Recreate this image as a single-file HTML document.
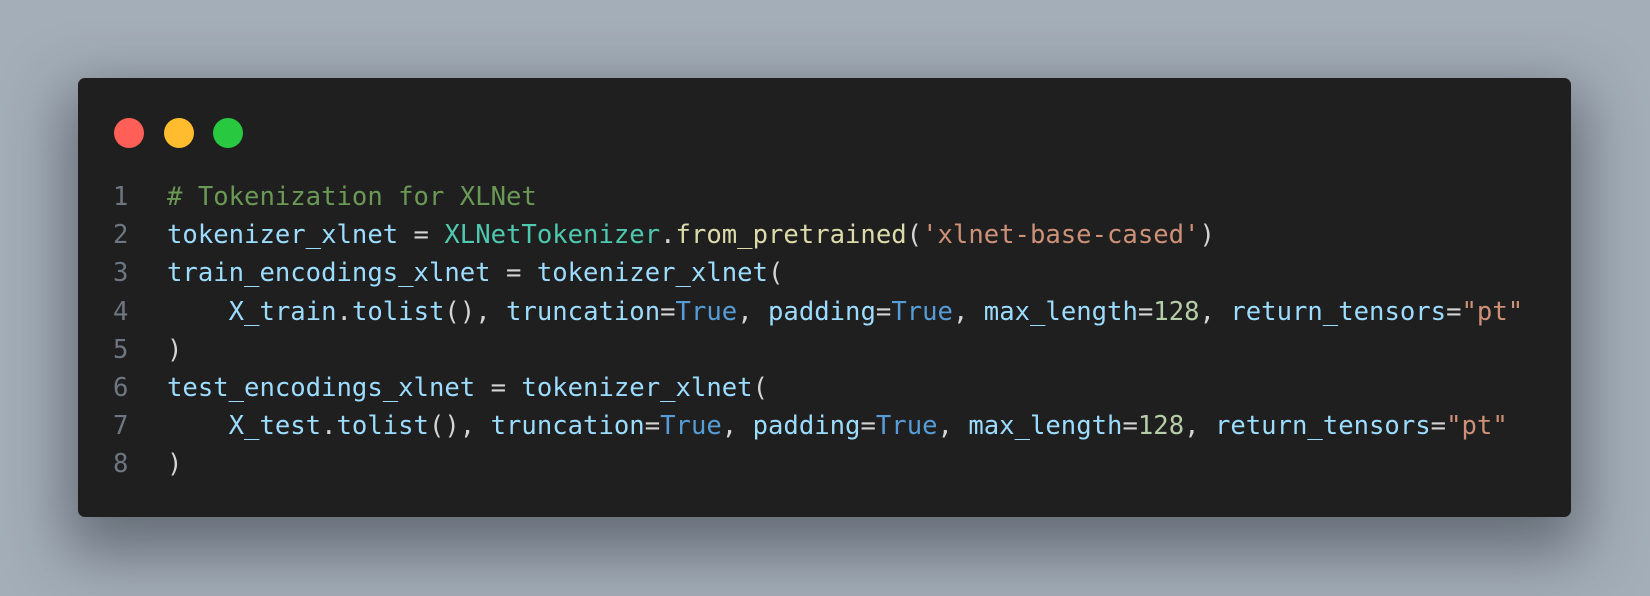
<!DOCTYPE html>
<html><head><style>
html,body{margin:0;padding:0;overflow:hidden}
body{width:1650px;height:596px;background:#a4aeb8;position:relative;overflow:hidden}
.win{position:absolute;left:78px;top:78px;width:1493px;height:439px;background:#1f1f1f;border-radius:7px;box-shadow:0 24px 60px 12px rgba(40,45,55,0.5)}
.dot{position:absolute;top:118px;width:30px;height:30px;border-radius:50%}
.code{position:absolute;left:0;top:178px;width:1650px;font-family:"DejaVu Sans Mono","Liberation Mono",monospace;font-size:25.6px;color:#d4d4d4}
.row{position:relative;height:38.2px;line-height:38px;white-space:pre}
.ln{position:absolute;left:113px;color:#6e7681}
.tx{position:absolute;left:167px}
.c{color:#6a9955}.v{color:#9cdcfe}.k{color:#4ec9b0}.f{color:#dcdcaa}.s{color:#ce9178}.n{color:#b5cea8}.b{color:#569cd6}
</style></head><body>
<div class="win"></div>
<div class="dot" style="left:114px;background:#ff5f57"></div>
<div class="dot" style="left:164px;background:#febc2e"></div>
<div class="dot" style="left:213px;background:#28c840"></div>
<div class="code"><div class="row"><span class="ln">1</span><span class="tx"><span class="c"># Tokenization for XLNet</span></span></div><div class="row"><span class="ln">2</span><span class="tx"><span class="v">tokenizer_xlnet</span> = <span class="k">XLNetTokenizer</span>.<span class="f">from_pretrained</span>(<span class="s">'xlnet-base-cased'</span>)</span></div><div class="row"><span class="ln">3</span><span class="tx"><span class="v">train_encodings_xlnet</span> = <span class="v">tokenizer_xlnet</span>(</span></div><div class="row"><span class="ln">4</span><span class="tx">    <span class="v">X_train</span>.<span class="v">tolist</span>(), <span class="v">truncation</span>=<span class="b">True</span>, <span class="v">padding</span>=<span class="b">True</span>, <span class="v">max_length</span>=<span class="n">128</span>, <span class="v">return_tensors</span>=<span class="s">"pt"</span></span></div><div class="row"><span class="ln">5</span><span class="tx">)</span></div><div class="row"><span class="ln">6</span><span class="tx"><span class="v">test_encodings_xlnet</span> = <span class="v">tokenizer_xlnet</span>(</span></div><div class="row"><span class="ln">7</span><span class="tx">    <span class="v">X_test</span>.<span class="v">tolist</span>(), <span class="v">truncation</span>=<span class="b">True</span>, <span class="v">padding</span>=<span class="b">True</span>, <span class="v">max_length</span>=<span class="n">128</span>, <span class="v">return_tensors</span>=<span class="s">"pt"</span></span></div><div class="row"><span class="ln">8</span><span class="tx">)</span></div></div>
</body></html>
